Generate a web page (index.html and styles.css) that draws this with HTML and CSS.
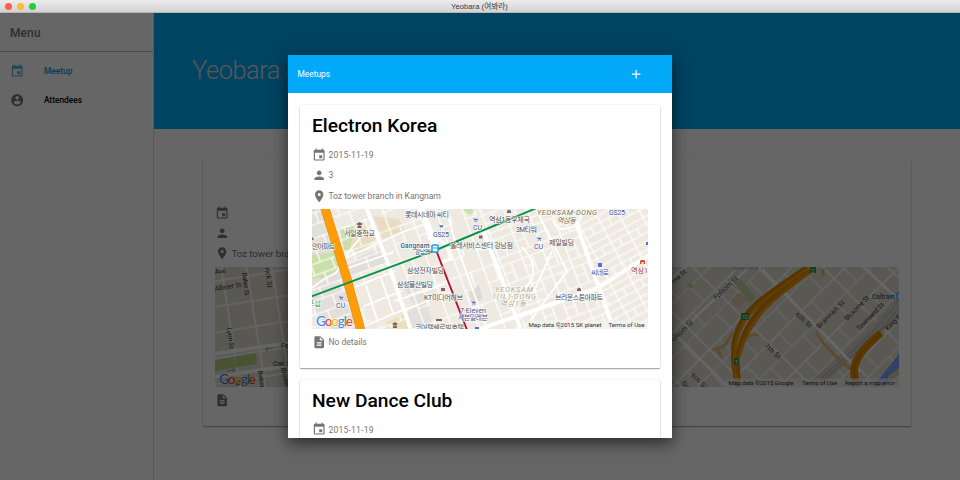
FILE: index.html
```html
<!DOCTYPE html>
<html lang="ko">
<head>
<meta charset="utf-8">
<title>Yeobara (여봐라)</title>
<link rel="stylesheet" href="styles.css">
</head>
<body>
<svg class="defs" width="0" height="0" aria-hidden="true">
  <symbol id="event" viewBox="0 0 24 24"><path d="M17 12h-5v5h5v-5zM16 1v2H8V1H6v2H5c-1.11 0-1.99.9-1.99 2L3 19c0 1.1.89 2 2 2h14c1.1 0 2-.9 2-2V5c0-1.1-.9-2-2-2h-1V1h-2zm3 18H5V8h14v11z"/></symbol>
  <symbol id="person" viewBox="0 0 24 24"><path d="M12 12c2.21 0 4-1.79 4-4s-1.79-4-4-4-4 1.79-4 4 1.79 4 4 4zm0 2c-2.67 0-8 1.34-8 4v2h16v-2c0-2.66-5.33-4-8-4z"/></symbol>
  <symbol id="place" viewBox="0 0 24 24"><path d="M12 2C8.13 2 5 5.13 5 9c0 5.25 7 13 7 13s7-7.75 7-13c0-3.87-3.13-7-7-7zm0 9.5a2.5 2.5 0 0 1 0-5 2.5 2.5 0 0 1 0 5z"/></symbol>
  <symbol id="description" viewBox="0 0 24 24"><path d="M14 2H6c-1.1 0-1.99.9-1.99 2L4 20c0 1.1.89 2 1.99 2H18c1.1 0 2-.9 2-2V8l-6-6zm2 16H8v-2h8v2zm0-4H8v-2h8v2zm-3-5V3.5L18.5 9H13z"/></symbol>
  <symbol id="account" viewBox="0 0 24 24"><path d="M12 2C6.48 2 2 6.48 2 12s4.48 10 10 10 10-4.48 10-10S17.52 2 12 2zm0 3c1.66 0 3 1.34 3 3s-1.34 3-3 3-3-1.34-3-3 1.34-3 3-3zm0 14.2c-2.5 0-4.71-1.28-6-3.22.03-1.99 4-3.08 6-3.08 1.99 0 5.97 1.09 6 3.08-1.29 1.94-3.5 3.22-6 3.22z"/></symbol>
  <symbol id="add" viewBox="0 0 24 24"><path d="M19 13h-6v6h-2v-6H5v-2h6V5h2v6h6v2z"/></symbol>
  <symbol id="cart" viewBox="0 0 6 5"><path d="M0 0h1.2l.4.8H6L5.2 3H1.8L.8.7H0zM1.8 3.6h1v1h-1zM4 3.6h1v1H4z"/></symbol>
</svg>

<header class="titlebar">
  <span class="dot red"></span><span class="dot yellow"></span><span class="dot green"></span>
  <span class="window-title">Yeobara (여봐라)</span>
</header>

<div class="window">
  <aside class="drawer">
    <div class="drawer-head">Menu</div>
    <nav>
      <a class="item active"><svg class="icon"><use href="#event"/></svg>Meetup</a>
      <a class="item"><svg class="icon"><use href="#account"/></svg>Attendees</a>
    </nav>
  </aside>
  <main class="main">
    <div class="hero">Yeobara (여봐라)</div>
    <section class="card page-card">
      <div class="row"><svg class="icon"><use href="#event"/></svg></div>
      <div class="row"><svg class="icon"><use href="#person"/></svg></div>
      <div class="row"><svg class="icon"><use href="#place"/></svg>Toz tower branch in Kangnam</div>
      <svg class="map" viewBox="0 0 684 120">
        <defs>
          <pattern id="westGrid" width="25" height="25.5" patternUnits="userSpaceOnUse" patternTransform="translate(7 12) rotate(-9)"><path d="M0 1H25M1 0V25.5" class="road"/></pattern>
          <pattern id="soma" width="46" height="38" patternUnits="userSpaceOnUse" patternTransform="translate(472 -4) rotate(-45)"><path d="M0 1H46M1 0V38" class="road"/><path d="M0 19H46M15 0V19M31 19V38" class="minor"/></pattern>
        </defs>
        <rect width="684" height="120" class="land-2"/>
        <rect width="230" height="120" fill="url(#westGrid)"/>
        <rect x="230" width="454" height="120" fill="url(#soma)"/>
        <path d="M-2 87L80 75M-2 110L80 98" stroke="#fff" stroke-width="3.5" fill="none"/>
        <path d="M0 93l41-7 1 11-42 7z" fill="#b6cf83"/>
        <path d="M20 90l1 11" stroke="#cadba6"/>
        <path d="M51 82l7-1M53 80l-3 2.500 3 1M12 104l7-1M17 101l3 2-3 2" stroke="#8f9cc0" fill="none"/>
        <path d="M520 16l6-4 15 19-7 5zM471 17l4-2 4 5-4 2z" fill="#bdd29b"/>
        <path d="M516 34l7-8 9 6-7 10z" fill="#dfc9ae"/>
        <path d="M590 120C615 95 660 62 684 26l0 26C650 76 640 90 605 120z" fill="#d1d0cd"/>
        <path d="M597 120C620 97 660 70 684 32M601 120C625 97 660 75 684 40M610 112L684 48" stroke="#b5b5b3" stroke-width="1.1" fill="none"/>
        <path d="M661 116l23-29v15l-14 18h-15z" fill="#7ba3ff"/>
        <path d="M673 109l11-8v7l-10 9z" fill="#c3d8a7"/>
        <path d="M457 10l20-15M457 72l90-84M545 0L645 105M463 70l70 70M643 -5l41 38" stroke="#fff" stroke-width="2.6" fill="none"/>
        <path d="M498 82q10 3 20-17M502 85q4 0 4 6M526 76q8-10 17-8M608 2v7M601 65q10 18 36 38" stroke="#e3bd76" stroke-width="3" fill="none"/>
        <path d="M594 -2C563 22 532 35 522 64Q514 86 523 121M600 1C556 29 529 47 522 92L524 121" stroke="#d98600" stroke-width="4.500" fill="none"/>
        <path d="M593 1C564 24 533 39 524 66Q516 88 522 118M600 2C558 31 535 49 524 90" stroke="#f39a10" stroke-width="3" fill="none"/>
        <path d="M666 66Q640 87 639 103L641 121" stroke="#e18c00" stroke-width="8" fill="none"/>
        <path d="M666 66Q640 87 639 103L641 121" stroke="#b97300" stroke-width="1" fill="none"/>
        <g fill="#3f9444"><rect x="526" y="46" width="8" height="7"/><rect x="519" y="91" width="5" height="7"/><rect x="595" y="0" width="6" height="6"/></g>
        <g class="shield"><text x="527" y="52">1C</text><text x="520" y="97">1</text><text x="596" y="5.500">2</text></g>
        <g class="street">
          <text transform="translate(0 7) rotate(-5)">Ave</text>
          <text transform="translate(0 24) rotate(-9)" textLength="27">Allister St</text>
          <text transform="translate(27 6) rotate(83)" textLength="23">Baker St</text>
          <text transform="translate(50 1) rotate(83)" textLength="20">rick St</text>
          <text transform="translate(12 61) rotate(83)" textLength="21">Lyon St</text>
          <text transform="translate(66 81)">Fell St</text>
          <text transform="translate(58 99)">Oak St</text>
          <text transform="translate(43 104) rotate(83)">Baker</text>
          <text transform="translate(66 101) rotate(78)">Broderick</text>
          <text transform="translate(20 113) rotate(83)">St</text>
          <text transform="translate(501 33) rotate(-43)" textLength="31">Folsom St</text>
          <text transform="translate(456 77) rotate(-43)" textLength="31">Folsom St</text>
          <text transform="translate(459 17) rotate(-43)">ma St</text>
          <text transform="translate(580 48) rotate(43)" textLength="20">6th St</text>
          <text transform="translate(549 79) rotate(43)" textLength="20">7th St</text>
          <text transform="translate(475 109) rotate(43)" textLength="20">9th St</text>
          <text transform="translate(466 117) rotate(43)">Do</text>
          <text transform="translate(604 62) rotate(-45)" textLength="37">Brannan St</text>
          <text transform="translate(632 54) rotate(-45)" textLength="32">Bluxome St</text>
          <text transform="translate(644 64) rotate(-45)" textLength="36">Townsend St</text>
          <text transform="translate(673 64) rotate(-45)">King St</text>
        </g>
        <text x="518" y="3" class="district" textLength="31">MARKET</text>
        <text x="657" y="32" class="transit" textLength="23">Caltrain</text>
        <rect x="682" y="26" width="4" height="7" rx="1" fill="#d7efff" stroke="#0b8dd8"/>
        <rect x="511" y="111.5" width="173" height="8.5" fill="#f5f5f5" opacity=".7"/>
        <g class="legal"><text x="513.5" y="118" textLength="65">Map data ©2015 Google</text><text x="587" y="118" textLength="35">Terms of Use</text><text x="630" y="118" textLength="50">Report a map error</text></g>
        <text x="4" y="116.500" class="google" textLength="37"><tspan fill="#4285f4">G</tspan><tspan fill="#ea4335">o</tspan><tspan fill="#fbbc05">o</tspan><tspan fill="#4285f4">g</tspan><tspan fill="#34a853">l</tspan><tspan fill="#ea4335">e</tspan></text>
      </svg>
      <div class="row"><svg class="icon"><use href="#description"/></svg></div>
    </section>
  </main>

  <div class="backdrop">
    <div class="dialog">
      <div class="toolbar"><span>Meetups</span><svg class="icon"><use href="#add"/></svg></div>
      <div class="list">
        <article class="card">
          <h2>Electron Korea</h2>
          <div class="row"><svg class="icon"><use href="#event"/></svg><span class="date">2015-11-19</span></div>
          <div class="row"><svg class="icon"><use href="#person"/></svg>3</div>
          <div class="row"><svg class="icon"><use href="#place"/></svg>Toz tower branch in Kangnam</div>
          <svg class="map" viewBox="0 0 336 120">
            <defs>
              <pattern id="gridA" width="22" height="24" patternUnits="userSpaceOnUse" patternTransform="translate(2 3) rotate(-20)"><path d="M0 1H22M0 12H22M1 0V12M11 12V24" class="minor"/></pattern>
              <pattern id="gridB" width="25" height="34" patternUnits="userSpaceOnUse" patternTransform="translate(88 52) rotate(-20)"><path d="M0 1H25M1 0V34M12 0V17M0 17H12" class="minor"/></pattern>
              <pattern id="gridC" width="22" height="27" patternUnits="userSpaceOnUse" patternTransform="translate(176 24) rotate(-21)"><path d="M0 1H22M1 0V27M0 9H22M0 18H11M11 9V27" class="minor"/></pattern>
              <pattern id="gridD" width="20" height="23" patternUnits="userSpaceOnUse" patternTransform="translate(266 16) rotate(-28)"><path d="M0 1H20M1 0V23M0 8H20M0 16H20M10 8V16" class="minor"/></pattern>
            </defs>
            <rect width="336" height="120" class="land"/>
            <path d="M0 0H12L35 70 48 120H20L0 100z" fill="#e2dfdb"/>
            <path d="M22 60l50-23 6 15-62 25z" fill="#e2dfdb"/>
            <path d="M88 80l20-6 14 44-26 2z" fill="#e3e0dc"/>
            <path d="M61 7l26 3 6 13-22 7zM38 26l18-10 8 14-18 15-12-6z" fill="#e9ddc1"/>
            <path d="M28 20l14-3-4 24h-6zM0 46l22-3 6 16-14 10-14 1zM150 0h14l-6 6z" fill="#cbdfaa"/>
            <path d="M72 108l22-8 4 20H76z" fill="#eadfbe"/>
            <path d="M156 80l11-4 4 14-11 4z" fill="#dedbd5"/>
            <path d="M0 0H54L98 120H0z" fill="url(#gridA)"/>
            <path d="M54 0H170L208 120H98z" fill="url(#gridB)"/>
            <path d="M165 0H258L300 120H208z" fill="url(#gridC)"/>
            <path d="M258 0H336V120H301z" fill="url(#gridD)"/>
            <path d="M44 78l39-16 20 37-41 21z" class="land"/>
            <path d="M44 78L83 62M54 76l12 37M69 69l12 35M52 97l38-15M50 118l46-19M30 61L82 43M27 54q12-9 25-13L88 24L116 14M0 79q12-10 24-15l15-24 20-24M83 92l50-17M93 101l45-18M134 0l9 32 32 88M210 38q15 15 10 32l-18 26M241 11q4 15 24 5L273 0M240 42l-22 50M256 61l-38 51M224 0l32 64" fill="none" stroke="#fff" stroke-width="1.8"/>
            <path d="M54 -2L76 54 99 121M170 18L209 121M263 11L302 121M337 46L286 79 206 107 165 121" fill="none" stroke="#fff" stroke-width="4"/>
            <path d="M108 -2L123 35" fill="none" stroke="#fff" stroke-width="7"/>
            <path d="M116 30q9-5 19 8l4 12-12 4" fill="none" stroke="#fff" stroke-width="3"/>
            <path d="M12.500-2L35 70 49 122" fill="none" stroke="#dd8e13" stroke-width="9"/>
            <path d="M12.500-2L35 70 49 122" fill="none" stroke="#fc9c07" stroke-width="8"/>
            <path d="M-2 88L124 41 227-2" fill="none" stroke="#08934b" stroke-width="1.9"/>
            <path d="M124 41L155 121" fill="none" stroke="#b90f39" stroke-width="1.9"/>
            <rect x="120" y="36" width="6" height="7" rx="1" fill="#fff" stroke="#17a2e3" stroke-width="1.5"/><path d="M121 39h4" stroke="#17a2e3"/>
            <g fill="#82645f"><path d="M44 15l3.500-2 3.500 2-3.500 2zM45.500 17h4v2h-4zM80 115l3-2 3 2-3 2zM81 117h4v2h-4zM195 4v-2l2-1.500 2 1.500v2zM167 26.500h3.500v3h-3.500zM129 79h4v3h-4zM124 110h6v2h-6zM265 82v-2l2-1.500 2 1.500v2zM0 29l1.500-1v3H0z"/></g>
            <g fill="#5870c7"><use href="#cart" x="126.500" y="15.500" width="5" height="4"/><use href="#cart" x="161" y="9" width="5" height="4"/><use href="#cart" x="26.500" y="87" width="5" height="4"/><use href="#cart" x="224.500" y="28" width="5" height="4"/><use href="#cart" x="159" y="92" width="5" height="4"/><rect x="286" y="54" width="4" height="4"/><rect x="163" y="118" width="4" height="2"/><rect x="246" y="118" width="4" height="2"/><path d="M334 33h2v3h-2z"/></g>
            <path d="M328 55v-3l1-1h3l1 1v3h-1.500v-2h-2v2z" fill="#e34734"/>
            <g class="label">
              <text x="93" y="8" textLength="44">롯데시네마 씨티</text>
              <text x="32" y="27" textLength="31">서일중학교</text>
              <text x="0" y="40" textLength="23">안아파트</text>
              <text x="138" y="39" textLength="63">올레서비스센터 강남점</text>
              <text x="177" y="13" textLength="41">역삼1동우체국</text>
              <text x="204" y="23" textLength="21">3M타워</text>
              <text x="237" y="36" textLength="25">제일빌딩</text>
              <text x="95" y="64" textLength="37">삼성전자빌딩</text>
              <text x="85" y="78" textLength="36">삼성물산빌딩</text>
              <text x="112" y="91" textLength="39">KT미디어허브</text>
              <text x="103" y="121" textLength="49">코아텔쉐르빌호텔</text>
              <text x="243" y="91" textLength="48">브라운스톤아파트</text>
            </g>
            <g class="label shop">
              <text x="121" y="28" textLength="16">GS25</text><text x="297" y="6" textLength="16">GS25</text>
              <text x="161" y="21" textLength="9">CU</text><text x="222" y="40" textLength="9">CU</text><text x="24" y="99" textLength="9">CU</text>
              <text x="279" y="66" textLength="18">씨네로</text><text x="148" y="104" textLength="26">7-Eleven</text><text x="146" y="111" textLength="30">세븐일레븐</text>
            </g>
            <text x="-4" y="97" class="label park">프삽</text>
            <text x="319" y="64" class="label station">역삼1동</text>
            <g class="district"><text x="225" y="6" textLength="60">YEOKSAM-DONG</text><text x="245" y="13.500" textLength="19">역삼동</text><g class="light"><text x="183" y="83" textLength="38">YEOKSAM</text><text x="180" y="90" textLength="44">1(IL)-DONG</text><text x="188" y="97" textLength="26">역삼1동</text></g></g>
            <text x="88.500" y="39" class="transit" textLength="29">Gangnam</text><text x="103" y="45" class="transit small">강남역</text>
            <rect x="214" y="111.500" width="122" height="8.500" fill="#f5f3ef" opacity=".75"/>
            <g class="legal"><text x="216.500" y="118" textLength="73">Map data ©2015 SK planet</text><text x="296.500" y="118" textLength="36">Terms of Use</text></g>
            <text x="4" y="116.500" class="google" textLength="37"><tspan fill="#4285f4">G</tspan><tspan fill="#ea4335">o</tspan><tspan fill="#fbbc05">o</tspan><tspan fill="#4285f4">g</tspan><tspan fill="#34a853">l</tspan><tspan fill="#ea4335">e</tspan></text>
          </svg>
          <div class="row detail"><svg class="icon"><use href="#description"/></svg>No details</div>
        </article>
        <article class="card">
          <h2>New Dance Club</h2>
          <div class="row"><svg class="icon"><use href="#event"/></svg><span class="date">2015-11-19</span></div>
        </article>
      </div>
    </div>
  </div>
</div>
</body>
</html>
```
FILE: styles.css
```css
* { box-sizing: border-box; }
body {
  margin: 0;
  width: 960px;
  height: 480px;
  overflow: hidden;
  display: flex;
  flex-direction: column;
  background: #fff;
  font-family: Roboto, "Noto Sans CJK KR", sans-serif;
}
.defs { position: absolute; }
.titlebar {
  height: 13.300px;
  flex: none;
  display: flex;
  align-items: center;
  gap: 5px;
  padding-left: 5px;
  background: linear-gradient(#ececec, #d3d3d3);
  border-bottom: 1px solid #b5b5b5;
}
.dot { width: 7px; height: 7px; border-radius: 50%; }
.red { background: #ff5c55; }
.yellow { background: #fdbd2e; }
.green { background: #27cb3f; }
.window-title {
  margin: 0 auto;
  padding: 2px 42px 0 0;
  font: 7.700px/12px "Liberation Sans", "Noto Sans CJK KR", sans-serif;
  color: #404040;
}
.window { position: relative; flex: 1; display: flex; min-height: 0; }
.icon { width: 14.400px; height: 14.400px; flex: none; fill: currentColor; }

.drawer { width: 154px; flex: none; border-right: 1px solid #dedede; }
.drawer-head {
  height: 38.500px;
  padding-left: 10px;
  line-height: 40px;
  font-size: 12px;
  font-weight: 500;
  letter-spacing: .1px;
  color: #757575;
  border-bottom: 1px solid #bdbdbd;
}
nav { padding-top: 5px; }
.item {
  display: flex;
  align-items: center;
  gap: 20px;
  height: 28.800px;
  padding-left: 9.500px;
  font-size: 8.400px;
  font-weight: 500;
  color: #000;
}
.item .icon { color: #757575; }
.item.active { color: #0398dc; }
.item.active .icon { color: #55add2; }

.main { flex: 1; min-width: 0; }
.hero {
  height: 115.400px;
  padding-left: 38px;
  line-height: 115px;
  font-size: 25.500px;
  font-weight: 300;
  letter-spacing: -.5px;
  background: #03a9f4;
  color: #d9d9d9;
  white-space: nowrap;
}
.card {
  background: #fff;
  border-radius: 1px;
  box-shadow: 0 1px 1.500px rgba(0, 0, 0, .38), 0 0 2px rgba(0, 0, 0, .1);
  padding: 0 12px;
}
.page-card { width: 708px; height: 267px; margin: 30px 0 0 49px; padding-top: 44.500px; }
.row {
  display: flex;
  align-items: center;
  gap: 2px;
  height: 20.500px;
  font-size: 8.600px;
  letter-spacing: -.04px;
  color: #757575;
}
.page-card .row { height: 20.200px; font-size: 9.900px; letter-spacing: -.12px; }
.page-card .map { margin-top: 3px; }
.page-card .row:last-child { margin-top: 3.500px; }
.map { display: block; width: 100%; height: 120px; overflow: hidden; }

.backdrop {
  position: absolute;
  inset: 0;
  display: flex;
  justify-content: center;
  align-items: flex-start;
  padding-top: 41.700px;
  background: rgba(0, 0, 0, .6);
}
.dialog {
  width: 384px;
  height: 383.300px;
  overflow: hidden;
  background: #fff;
  box-shadow: 0 5px 15px rgba(0, 0, 0, .6);
}
.toolbar {
  height: 38.400px;
  display: flex;
  align-items: center;
  justify-content: space-between;
  padding: 0 29px 0 9.500px;
  background: #03a9f9;
  color: #fff;
  font-size: 8.400px;
}
.list { display: flex; flex-direction: column; gap: 11.900px; padding: 11.600px 12px; }
.list .card { height: 263px; flex: none; }
h2 {
  margin: 0;
  height: 39.500px;
  line-height: 42px;
  font-size: 19.200px;
  font-weight: 500;
  color: #000;
}
.date { letter-spacing: .2px; }
.list .map { margin-top: 3px; }
.detail { margin-top: 3px; }

.land { fill: #eeeae2; }
.land-2 { fill: #e2ddd0; }
.minor { stroke: #fff; stroke-width: 1.200px; fill: none; }
.road { stroke: #fff; stroke-width: 1.600px; fill: none; }
.label, .street, .district, .transit, .google {
  paint-order: stroke;
  stroke: #fff;
  stroke-opacity: .75;
  stroke-width: 1.300px;
  stroke-linejoin: round;
}
.label { font-size: 7.100px; fill: #4d4d4d; }
.shop { fill: #45529a; }
.park { fill: #48964d; }
.station { fill: #a63b35; }
.street { font-size: 6.800px; fill: #333; stroke-opacity: .2; }
.district { font-size: 7.400px; font-style: italic; fill: #817047; }
.light { fill: #b3a78b; }
.transit { font-size: 6.600px; font-weight: 500; fill: #1c628d; }
.small { font-size: 5.500px; }
.shield { font-size: 5.500px; fill: #fff; stroke: none; }
.legal { font-size: 6.200px; fill: #333; }
.google { font-family: Lato, Roboto, sans-serif; font-size: 13.500px; font-weight: 500; stroke-width: 1px; }
.page-card .google, .page-card .transit, .page-card .district { stroke-opacity: .15; }
.page-card .district { fill: #aaa08b; }
```
